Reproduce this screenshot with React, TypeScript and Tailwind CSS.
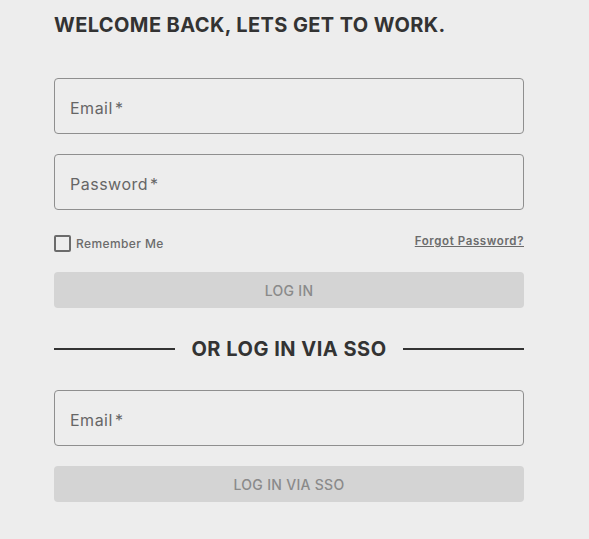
export default function App() {
  return (
    <div
      className="min-h-[539px] bg-[#ededed] px-[54px] pt-[12px]"
      style={{ fontFamily: "Inter, 'Noto Sans', sans-serif" }}
    >
      <div className="w-[470px]">
        <h1 className="text-[20px] leading-[26px] font-bold text-[#333333] tracking-[0.4px]">
          WELCOME BACK, LETS GET TO WORK.
        </h1>

        <div className="mt-[40px] flex flex-col gap-[20px]">
          <Field label="Email" />
          <Field label="Password" />
        </div>

        <div className="mt-[24px] flex items-center justify-between">
          <label className="flex items-center gap-[5px]">
            <span className="w-[17px] h-[17px] border-2 border-[#6b6b6b] rounded-[2px]" />
            <span className="text-[12px] font-medium text-[#6b6b6b] mt-[1px] tracking-[0.4px]">
              Remember Me
            </span>
          </label>
          <a className="text-[11.5px] font-semibold text-[#6b6b6b] underline -mt-[3px] tracking-[0.6px]">
            Forgot Password?
          </a>
        </div>

        <button className="mt-[19px] w-full h-[36px] rounded-[4px] bg-[#d4d4d4] text-[14px] font-medium text-[#8a8a8a] tracking-[0.3px]">
          LOG IN
        </button>

        <div className="mt-[28px] flex items-center gap-[16px]">
          <div className="flex-1 h-[2px] bg-[#333333]" />
          <span className="text-[20px] leading-[26px] font-bold text-[#333333] tracking-[0.5px]">
            OR LOG IN VIA SSO
          </span>
          <div className="flex-1 h-[2px] bg-[#333333]" />
        </div>

        <div className="mt-[28px]">
          <Field label="Email" />
        </div>

        <button className="mt-[20px] w-full h-[36px] rounded-[4px] bg-[#d4d4d4] text-[14px] font-medium text-[#8a8a8a] tracking-[0.3px]">
          LOG IN VIA SSO
        </button>
      </div>
    </div>
  );
}

function Field({ label }: { label: string }) {
  return (
    <div className="h-[56px] rounded-[4px] border border-[#8f8f8f] flex items-center px-[15px] pt-[3px]">
      <span className="text-[16px] text-[#666666] tracking-[0.5px]">
        {label}
        <span className="ml-[2px]">*</span>
      </span>
    </div>
  );
}
